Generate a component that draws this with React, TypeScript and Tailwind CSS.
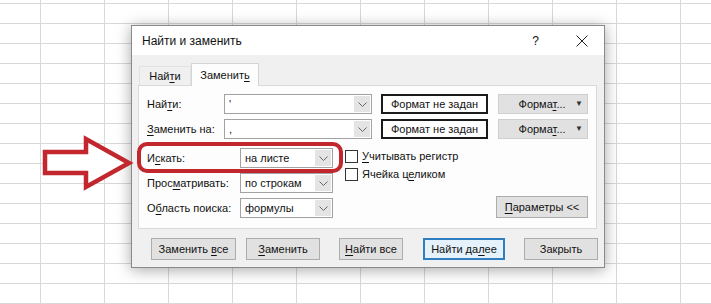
import React from "react";

const red = "#c1272d";

function Chevron() {
    return (
        <svg width="9" height="5" viewBox="0 0 9 5" fill="none">
            <path d="M0.5 0.5 L4.5 4.5 L8.5 0.5" stroke="#666" strokeWidth="1" />
        </svg>
    );
}

function U({ children }: { children: React.ReactNode }) {
    return <span className="underline decoration-1 underline-offset-[2px]">{children}</span>;
}

function Combo({ value, w }: { value: string; w: string }) {
    return (
        <div className={`flex h-[20px] items-stretch border border-[#a2a2a2] bg-white ${w}`}>
            <div className="flex flex-1 items-center pl-[4px] leading-none">{value}</div>
            <div className="m-px flex w-[16px] items-center justify-center bg-[#e4e4e4]">
                <Chevron />
            </div>
        </div>
    );
}

function Btn({ children, w, primary }: { children: React.ReactNode; w: string; primary?: boolean }) {
    return (
        <div
            className={`flex h-[22px] items-center justify-center whitespace-nowrap leading-none ${w} ${
                primary ? "border-2 border-[#2f7fc0] bg-[#e5f1fb]" : "border border-[#adadad] bg-[#e1e1e1]"
            }`}
        >
            <span>{children}</span>
        </div>
    );
}

function FormatBtn() {
    return (
        <div className="ml-[10px] flex h-[20px] w-[90px] items-center border border-[#cfcfcf] bg-[#e1e1e1] leading-none">
            <span className="flex-1 pl-[10px] text-center">
                Форма<U>т</U>...
            </span>
            <span className="pr-[4px] text-[8px] text-[#333]">▼</span>
        </div>
    );
}

function Checkbox({ children }: { children: React.ReactNode }) {
    return (
        <div className="flex h-[13px] items-center whitespace-nowrap leading-none">
            <div className="h-[13px] w-[13px] border border-[#333] bg-white" />
            <span className="ml-[4px]">{children}</span>
        </div>
    );
}

function FindReplaceDialog() {
    return (
        <div className="absolute left-[131px] top-[25px] flex h-[243px] w-[474px] flex-col border border-[#8a8a8a] bg-[#f0f0f0] shadow-[0_2px_14px_rgba(0,0,0,0.35)]">
            {/* Title bar */}
            <div className="flex h-[29px] items-center bg-white pl-[10px] text-[12px] leading-none">
                <span>Найти и заменить</span>
                <span className="ml-auto mr-[37px]">?</span>
                <svg width="12" height="12" viewBox="0 0 12 12" className="mr-[16px]">
                    <path d="M0.5 0.5 L11.5 11.5 M11.5 0.5 L0.5 11.5" stroke="#222" strokeWidth="1" />
                </svg>
            </div>

            {/* Tabs */}
            <div className="flex items-end pl-[7px] pt-[8px]">
                <div className="flex h-[19px] w-[52px] items-center justify-center border border-b-0 border-[#e2e2e2] leading-none">
                    <span>
                        Най<U>т</U>и
                    </span>
                </div>
                <div className="relative z-10 -mb-px flex h-[23px] w-[68px] items-center justify-center border border-b-0 border-[#d4d4d4] bg-[#fdfdfd] leading-none">
                    <span>
                        Заменит<U>ь</U>
                    </span>
                </div>
            </div>

            {/* Panel */}
            <div className="ml-[6px] flex h-[144px] w-[459px] flex-col border border-[#d9d9d9] bg-[#fdfdfd] pl-[8px] pt-[8px]">
                <div className="flex h-[20px] items-center">
                    <div className="w-[77px] whitespace-nowrap">
                        Най<U>т</U>и:
                    </div>
                    <Combo value="'" w="w-[148px]" />
                    <div className="ml-[9px] flex h-[20px] w-[107px] items-center justify-center border-2 border-[#1a1a1a] bg-white leading-none">
                        Формат не задан
                    </div>
                    <FormatBtn />
                </div>
                <div className="mt-[5px] flex h-[20px] items-center">
                    <div className="w-[77px] whitespace-nowrap">
                        <U>З</U>аменить на:
                    </div>
                    <Combo value="," w="w-[148px]" />
                    <div className="ml-[9px] flex h-[20px] w-[107px] items-center justify-center border-2 border-[#1a1a1a] bg-white leading-none">
                        Формат не задан
                    </div>
                    <FormatBtn />
                </div>

                <div className="mt-[9px] flex">
                    <div className="flex flex-col gap-[5px]">
                        <div className="flex h-[20px] items-center">
                            <div className="w-[93px] whitespace-nowrap">
                                И<U>с</U>кать:
                            </div>
                            <Combo value="на листе" w="w-[93px]" />
                        </div>
                        <div className="flex h-[20px] items-center">
                            <div className="w-[93px] whitespace-nowrap">
                                Прос<U>м</U>атривать:
                            </div>
                            <Combo value="по строкам" w="w-[93px]" />
                        </div>
                        <div className="flex h-[20px] items-center">
                            <div className="w-[93px] whitespace-nowrap">
                                О<U>б</U>ласть поиска:
                            </div>
                            <Combo value="формулы" w="w-[93px]" />
                        </div>
                    </div>
                    <div className="ml-[12px] flex w-[243px] flex-col">
                        <div className="mt-[2px]">
                            <Checkbox>
                                <U>У</U>читывать регистр
                            </Checkbox>
                        </div>
                        <div className="mt-[5px]">
                            <Checkbox>
                                Ячейка ц<U>е</U>ликом
                            </Checkbox>
                        </div>
                        <div className="mt-auto self-end">
                            <Btn w="w-[92px]">
                                <U>П</U>араметры &lt;&lt;
                            </Btn>
                        </div>
                    </div>
                </div>
            </div>

            {/* Buttons */}
            <div className="mt-[9px] flex pl-[19px]">
                <Btn w="w-[85px]">
                    Заменить <U>в</U>се
                </Btn>
                <div className="ml-[10px]">
                    <Btn w="w-[74px]">
                        <U>З</U>аменить
                    </Btn>
                </div>
                <div className="ml-[19px]">
                    <Btn w="w-[64px]">
                        <U>Н</U>айти все
                    </Btn>
                </div>
                <div className="ml-[20px]">
                    <Btn w="w-[82px]" primary>
                        Найти да<U>л</U>ее
                    </Btn>
                </div>
                <div className="ml-[19px]">
                    <Btn w="w-[74px]">Закрыть</Btn>
                </div>
            </div>
        </div>
    );
}

export default function App() {
    return (
        <div className="relative h-[304px] w-[711px] overflow-hidden bg-white bg-[linear-gradient(to_right,#d8d8d8_1px,transparent_1px),linear-gradient(to_bottom,#d8d8d8_1px,transparent_1px)] bg-[size:64px_20px] bg-[position:40px_3px] font-['Liberation_Sans',Arial,sans-serif] text-[11px] text-[#111]">
            <FindReplaceDialog />

            {/* Annotation: red outline around "Искать" */}
            <div
                className="absolute left-[137px] top-[142px] h-[31px] w-[206px] rounded-[10px] border-[4px]"
                style={{ borderColor: red }}
            />

            {/* Annotation: hollow arrow */}
            <svg className="absolute left-[38px] top-[132px]" width="100" height="62" viewBox="38 132 100 62">
                <polygon
                    points="45,152 86,152 86,139 129,163 86,187 86,173 45,173"
                    fill="white"
                    stroke={red}
                    strokeWidth="4.5"
                    strokeLinejoin="miter"
                />
            </svg>
        </div>
    );
}
